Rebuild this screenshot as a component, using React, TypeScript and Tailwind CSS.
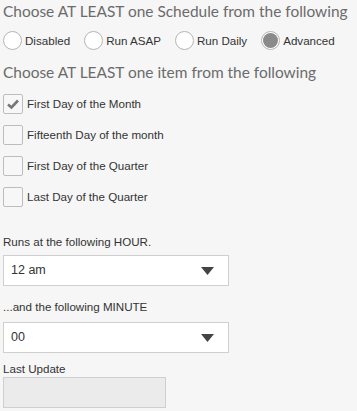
import React from 'react';

const labelFont = { fontFamily: '"Liberation Sans", Arial, sans-serif' };
const headFont = { fontFamily: 'Lato, "Open Sans", sans-serif' };

const Radio: React.FC<{ label: string; checked?: boolean }> = ({ label, checked }) => (
  <label className="flex items-center gap-[3px] shrink-0 whitespace-nowrap">
    <span className="w-[19px] h-[19px] rounded-full border border-[#b5b5b5] bg-white flex items-center justify-center">
      {checked && <span className="w-[15px] h-[15px] rounded-full bg-[#8a8a8a]"></span>}
    </span>
    <span className="text-[11.6px] text-[#333]">{label}</span>
  </label>
);

const Check: React.FC<{ label: string; checked?: boolean }> = ({ label, checked }) => (
  <label className="flex items-center gap-[4px] h-[20px] whitespace-nowrap">
    <span className="w-[20px] h-[20px] border border-[#bdbdbd] bg-[#f7f7f7] rounded-[2px] flex items-center justify-center">
      {checked && (
        <svg width="14" height="12" viewBox="0 0 14 12">
          <path d="M2 6.5 L5.5 9.5 L12 2.5" fill="none" stroke="#777" strokeWidth="2.6" />
        </svg>
      )}
    </span>
    <span className="text-[11.6px] text-[#333]">{label}</span>
  </label>
);

const Select: React.FC<{ value: string }> = ({ value }) => (
  <div className="w-[226px] h-[31px] border border-[#cfcfcf] bg-white flex items-center justify-between pl-[7px] pr-[14px]">
    <span className="text-[12.5px] text-[#333]">{value}</span>
    <svg width="13" height="8" viewBox="0 0 13 8">
      <path d="M0 0 H13 L6.5 8 Z" fill="#444" />
    </svg>
  </div>
);

export default function App() {
  return (
    <div className="w-[357px] h-[411px] bg-[#f6f6f6] pl-[3px] overflow-hidden" style={labelFont}>
      <h2 className="text-[15.45px] text-[#6b6b6b] leading-[22px] whitespace-nowrap" style={headFont}>
        Choose AT LEAST one Schedule from the following
      </h2>
      <div className="flex items-center gap-[14px] mt-[9px]">
        <Radio label="Disabled" />
        <Radio label="Run ASAP" />
        <Radio label="Run Daily" />
        <Radio label="Advanced" checked />
      </div>
      <h2 className="text-[15.45px] text-[#6b6b6b] leading-[22px] mt-[11px] whitespace-nowrap" style={headFont}>
        Choose AT LEAST one item from the following
      </h2>
      <div className="flex flex-col gap-[11px] mt-[11px]">
        <Check label="First Day of the Month" checked />
        <Check label="Fifteenth Day of the month" />
        <Check label="First Day of the Quarter" />
        <Check label="Last Day of the Quarter" />
      </div>
      <div className="text-[11.6px] text-[#333] mt-[27px] leading-[16px]">Runs at the following HOUR.</div>
      <div className="mt-[5px]">
        <Select value="12 am" />
      </div>
      <div className="text-[11.6px] text-[#333] mt-[13px] leading-[16px]">...and the following MINUTE</div>
      <div className="mt-[7px]">
        <Select value="00" />
      </div>
      <div className="text-[11.6px] text-[#333] mt-[8px] leading-[16px]">Last Update</div>
      <div className="w-[163px] h-[31px] border border-[#cfcfcf] bg-[#ebebeb]"></div>
    </div>
  );
}
